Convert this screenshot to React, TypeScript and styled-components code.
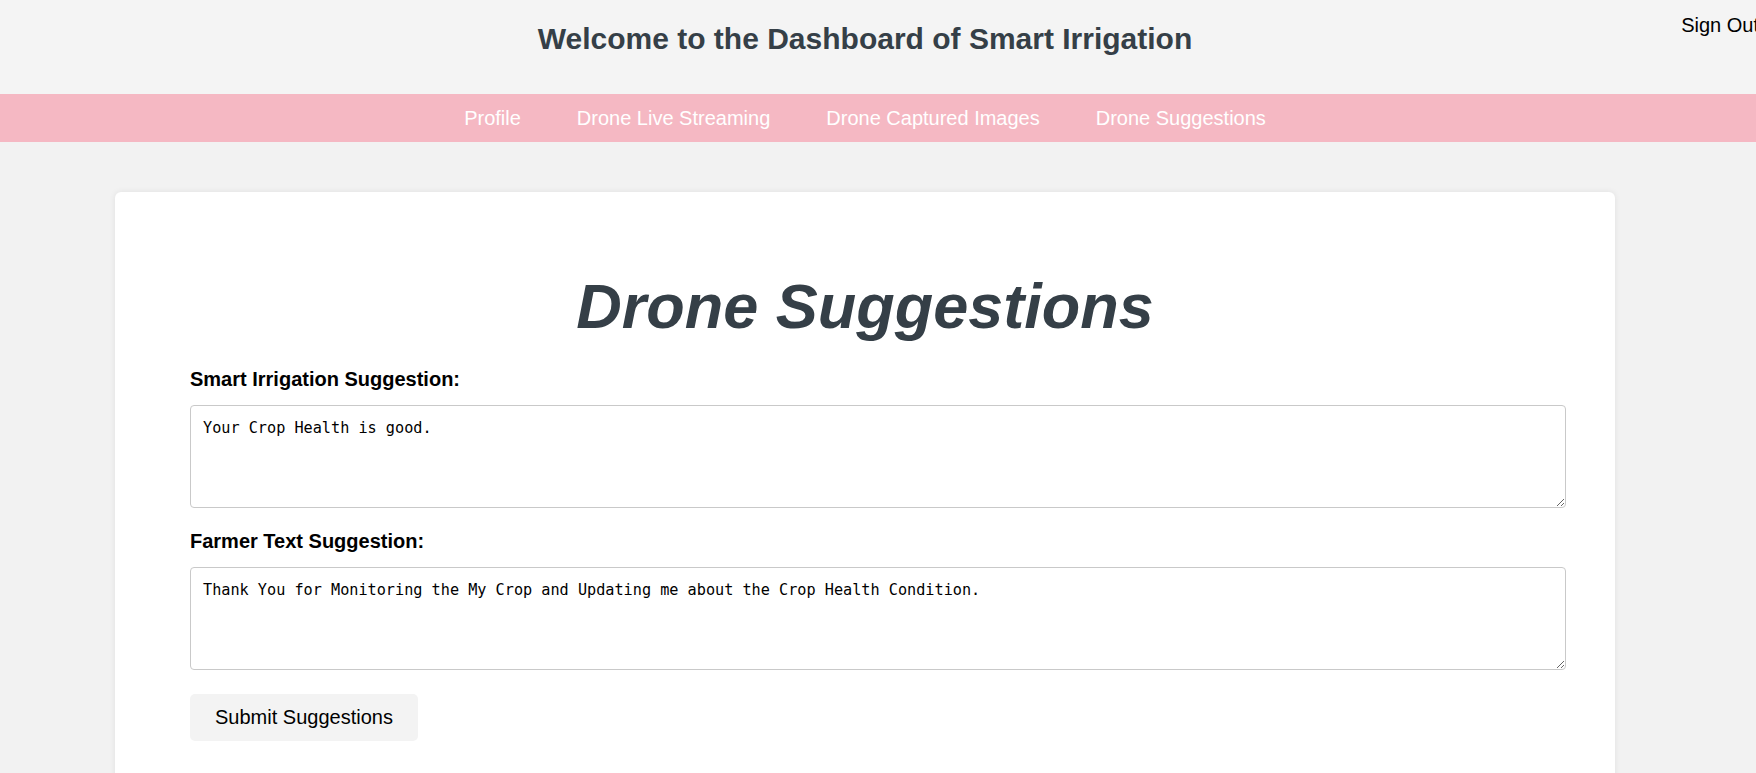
import React from "react";
import styled, { createGlobalStyle } from "styled-components";

const GlobalStyle = createGlobalStyle`
  html, body {
    margin: 0;
    padding: 0;
    background: #f2f2f2;
    font-family: "Liberation Sans", Arial, sans-serif;
    overflow-x: hidden;
  }
  * { box-sizing: border-box; }
`;

const Header = styled.header`
  position: relative;
  height: 94px;
  background: #f4f4f4;
  padding: 22px 26px 0 0;
  text-align: center;
`;

const HeaderTitle = styled.h1`
  margin: 0;
  font-size: 30px;
  line-height: 34.5px;
  font-weight: 700;
  color: #353f47;
`;

const SignOut = styled.a`
  position: absolute;
  top: 14px;
  right: -3px;
  font-size: 20px;
  line-height: 23px;
  color: #000;
  cursor: pointer;
  white-space: nowrap;
`;

const Nav = styled.nav`
  height: 48px;
  background: #f5b8c3;
  display: flex;
  justify-content: center;
  align-items: center;
  gap: 56px;
  padding-right: 26px;
`;

const NavLink = styled.a`
  color: #fff;
  font-size: 20px;
  line-height: 23px;
  text-decoration: none;
  cursor: pointer;
`;

const Main = styled.main`
  display: flex;
  justify-content: center;
  padding: 50px 26px 0 0;
`;

const Card = styled.section`
  width: 1500px;
  background: #fff;
  border-radius: 6px;
  box-shadow: 0 0 6px rgba(0, 0, 0, 0.08);
  padding: 78px 75px 40px;
`;

const Title = styled.h2`
  margin: 0 0 24px;
  text-align: center;
  font-size: 63px;
  line-height: 73.5px;
  font-weight: 700;
  font-style: italic;
  color: #353f47;
`;

const Label = styled.label`
  display: block;
  margin: 0 0 14px;
  font-size: 20px;
  line-height: 23px;
  font-weight: 700;
  color: #000;
`;

const TextArea = styled.textarea<{ $last?: boolean }>`
  display: block;
  box-sizing: content-box;
  width: 100%;
  height: 76px;
  padding: 13px 12px 12px;
  margin: 0 0 ${(p) => (p.$last ? "24px" : "22px")};
  border: 1px solid #c9c9c9;
  border-radius: 4px;
  background: #fff;
  color: #000;
  font-family: "DejaVu Sans Mono", "Liberation Mono", monospace;
  font-size: 15.2px;
  line-height: 18px;
`;

const Button = styled.button`
  display: block;
  height: 47px;
  padding: 0 25px;
  border: none;
  border-radius: 5px;
  background: #f3f3f3;
  color: #000;
  font-family: "Liberation Sans", Arial, sans-serif;
  font-size: 20px;
  cursor: pointer;
`;

export default function App() {
  return (
    <>
      <GlobalStyle />
      <Header>
        <HeaderTitle>Welcome to the Dashboard of Smart Irrigation</HeaderTitle>
        <SignOut>Sign Out</SignOut>
      </Header>
      <Nav>
        <NavLink>Profile</NavLink>
        <NavLink>Drone Live Streaming</NavLink>
        <NavLink>Drone Captured Images</NavLink>
        <NavLink>Drone Suggestions</NavLink>
      </Nav>
      <Main>
        <Card>
          <Title>Drone Suggestions</Title>
          <Label htmlFor="smart">Smart Irrigation Suggestion:</Label>
          <TextArea id="smart" defaultValue="Your Crop Health is good." />
          <Label htmlFor="farmer">Farmer Text Suggestion:</Label>
          <TextArea
            id="farmer"
            $last
            defaultValue="Thank You for Monitoring the My Crop and Updating me about the Crop Health Condition."
          />
          <Button>Submit Suggestions</Button>
        </Card>
      </Main>
    </>
  );
}
